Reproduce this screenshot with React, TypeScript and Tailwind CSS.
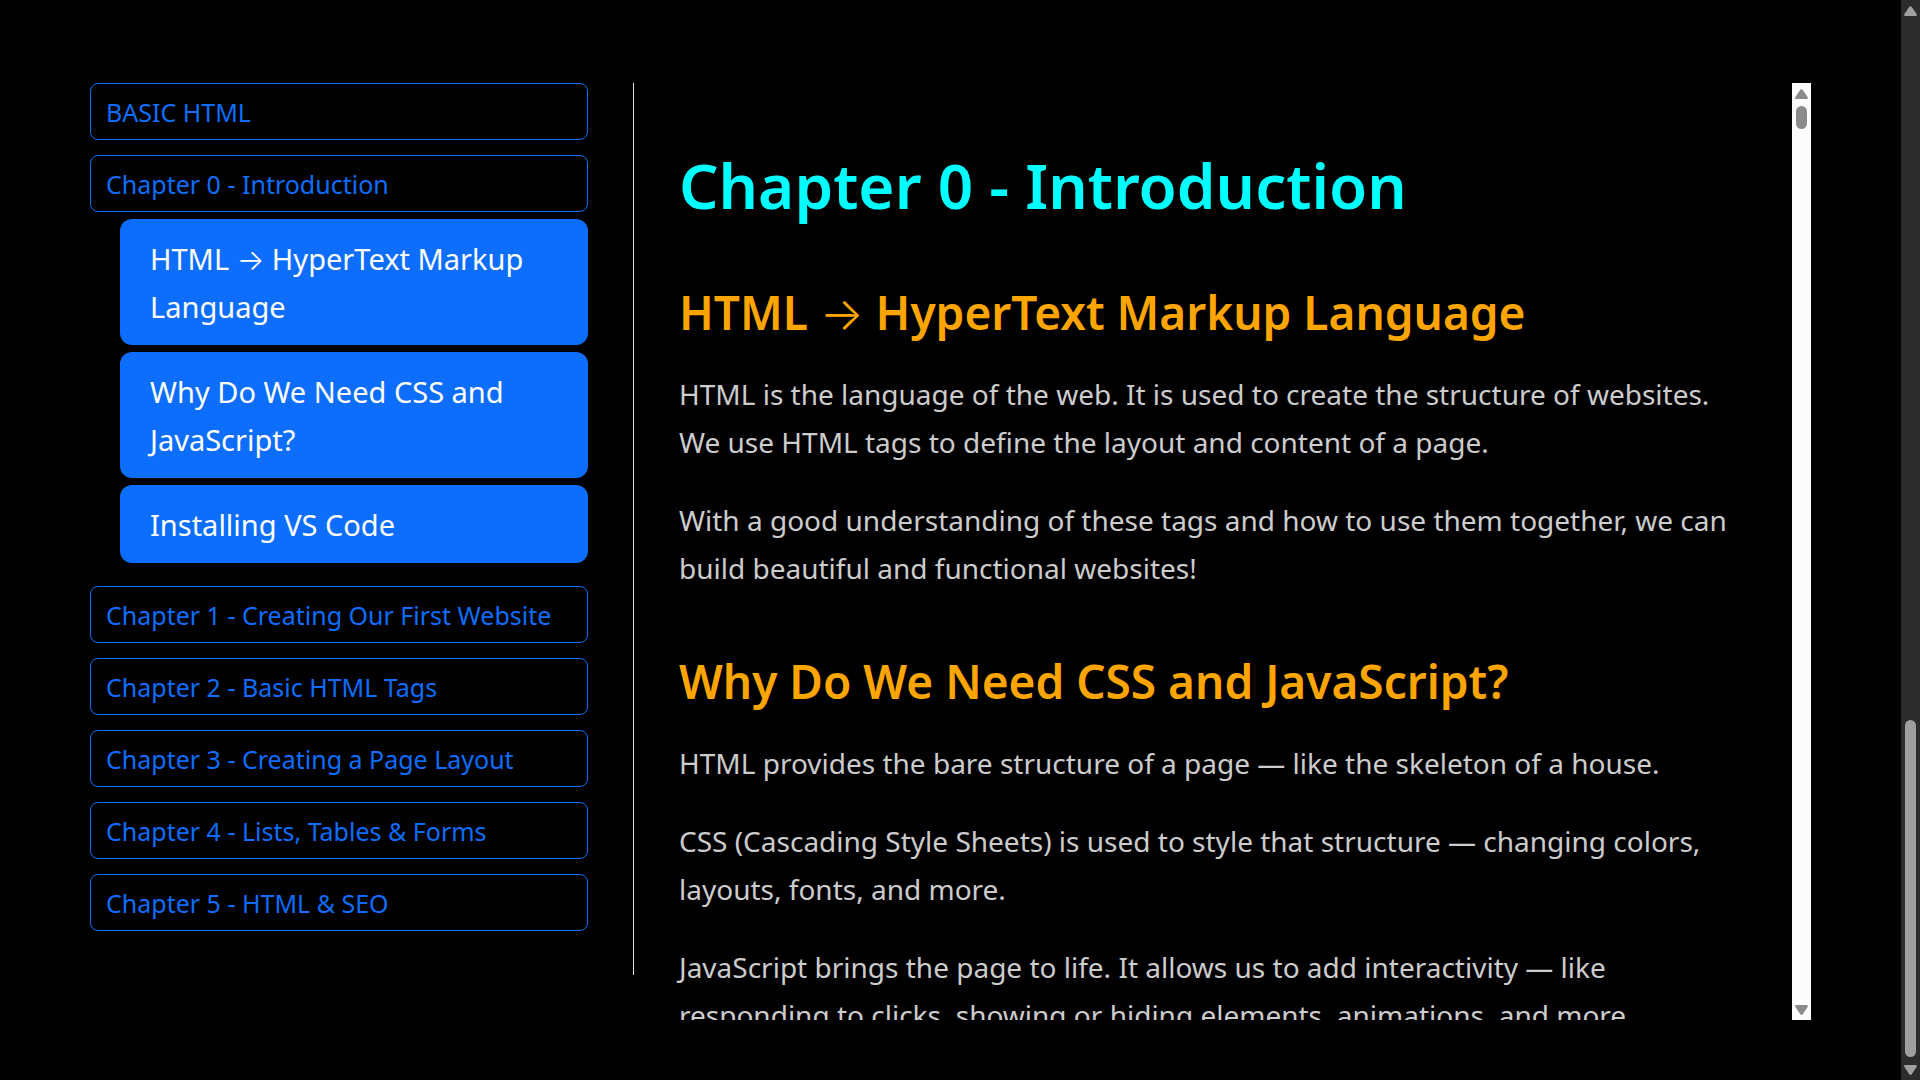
import React from "react";

type Chapter = { title: string; sections?: string[] };

const chapters: Chapter[] = [
  { title: "BASIC HTML" },
  {
    title: "Chapter 0 - Introduction",
    sections: [
      "HTML → HyperText Markup Language",
      "Why Do We Need CSS and JavaScript?",
      "Installing VS Code",
    ],
  },
  { title: "Chapter 1 - Creating Our First Website" },
  { title: "Chapter 2 - Basic HTML Tags" },
  { title: "Chapter 3 - Creating a Page Layout" },
  { title: "Chapter 4 - Lists, Tables & Forms" },
  { title: "Chapter 5 - HTML & SEO" },
];

const lessons = [
  {
    heading: "HTML → HyperText Markup Language",
    paragraphs: [
      "HTML is the language of the web. It is used to create the structure of websites. We use HTML tags to define the layout and content of a page.",
      "With a good understanding of these tags and how to use them together, we can build beautiful and functional websites!",
    ],
  },
  {
    heading: "Why Do We Need CSS and JavaScript?",
    paragraphs: [
      "HTML provides the bare structure of a page — like the skeleton of a house.",
      "CSS (Cascading Style Sheets) is used to style that structure — changing colors, layouts, fonts, and more.",
      "JavaScript brings the page to life. It allows us to add interactivity — like responding to clicks, showing or hiding elements, animations, and more.",
    ],
  },
];

// Sets the arrow character in a lighter face than the words around it.
function Title({ text }: { text: string }) {
  const [before, after] = text.split("→");
  if (after === undefined) return <>{text}</>;
  return (
    <>
      {before}
      <span className="font-['Inter',sans-serif] leading-none font-light">→</span>
      {after}
    </>
  );
}

function Arrow({ down = false }: { down?: boolean }) {
  return (
    <svg viewBox="0 0 13 10" className="h-[10px] w-[13px]" fill="currentColor" aria-hidden="true">
      {down ? (
        <path d="M1.4 0h10.2c1.1 0 1.6 1 1 1.9L7.7 9.2c-.6.9-1.8.9-2.4 0L.4 1.9C-.2 1 .3 0 1.4 0z" />
      ) : (
        <path d="M1.4 10h10.2c1.1 0 1.6-1 1-1.9L7.7.8C7.1-.1 5.9-.1 5.3.8L.4 8.1C-.2 9 .3 10 1.4 10z" />
      )}
    </svg>
  );
}

function ChapterNav() {
  return (
    <nav
      aria-label="Chapters"
      className="mb-[45px] flex w-[544px] shrink-0 flex-col gap-[15px] border-r border-[#dee2e6] pr-[45px]"
    >
      {chapters.map((chapter) => (
        <div key={chapter.title} className="flex flex-col gap-[7px] has-[ul]:mb-2">
          <a
            href="#"
            className="rounded-lg border border-[#0d6efd] px-[15px] pt-[10px] pb-2 text-[25px] leading-[37px] text-[#0d6efd]"
          >
            {chapter.title}
          </a>
          {chapter.sections && (
            <ul className="flex flex-col gap-[7px] pl-[30px]">
              {chapter.sections.map((section) => (
                <li key={section} className="flex">
                  <a
                    href="#"
                    className="flex-1 rounded-xl bg-[#0d6efd] px-[30px] pt-4 pb-[14px] text-[29px] leading-[48px] text-white"
                  >
                    <Title text={section} />
                  </a>
                </li>
              ))}
            </ul>
          )}
        </div>
      ))}
    </nav>
  );
}

export default function App() {
  return (
    <div className="flex h-screen bg-black font-['Noto_Sans',sans-serif]">
      <main className="flex min-w-0 flex-1 px-[90px] pt-[83px] pb-[60px]">
        <ChapterNav />
        <div className="flex min-w-0 flex-1">
          <article className="min-w-0 flex-1 overflow-hidden px-[45px] pt-16">
            <h1 className="text-[62px] leading-[76px] font-semibold text-[#00ffff]">
              Chapter 0 - Introduction
            </h1>
            {lessons.map((lesson) => (
              <section key={lesson.heading} className="mt-[60px]">
                <h2 className="text-[46px] leading-[58px] font-semibold text-[#ffa500]">
                  <Title text={lesson.heading} />
                </h2>
                {lesson.paragraphs.map((text) => (
                  <p key={text} className="mt-[30px] text-[28px] leading-[48px] text-[#cccccc] first-of-type:mt-[29px]">
                    {text}
                  </p>
                ))}
              </section>
            ))}
          </article>
          <div className="flex w-[19px] shrink-0 flex-col items-center bg-[#fcfcfc] text-[#8b8b8b]">
            <button type="button" aria-label="Scroll lesson up" className="pt-[6px] pb-[7px]">
              <Arrow />
            </button>
            <div className="h-[23px] w-[11px] rounded-full bg-current" />
            <button type="button" aria-label="Scroll lesson down" className="mt-auto pb-[5px]">
              <Arrow down />
            </button>
          </div>
        </div>
      </main>
      <div className="flex w-[19px] shrink-0 flex-col items-center bg-[#2c2c2c] text-[#9f9f9f]">
        <button type="button" aria-label="Scroll page up" className="pt-[6px]">
          <Arrow />
        </button>
        <div className="mt-auto h-[337px] w-[11px] rounded-full bg-current" />
        <button type="button" aria-label="Scroll page down" className="pt-2 pb-[5px]">
          <Arrow down />
        </button>
      </div>
    </div>
  );
}
